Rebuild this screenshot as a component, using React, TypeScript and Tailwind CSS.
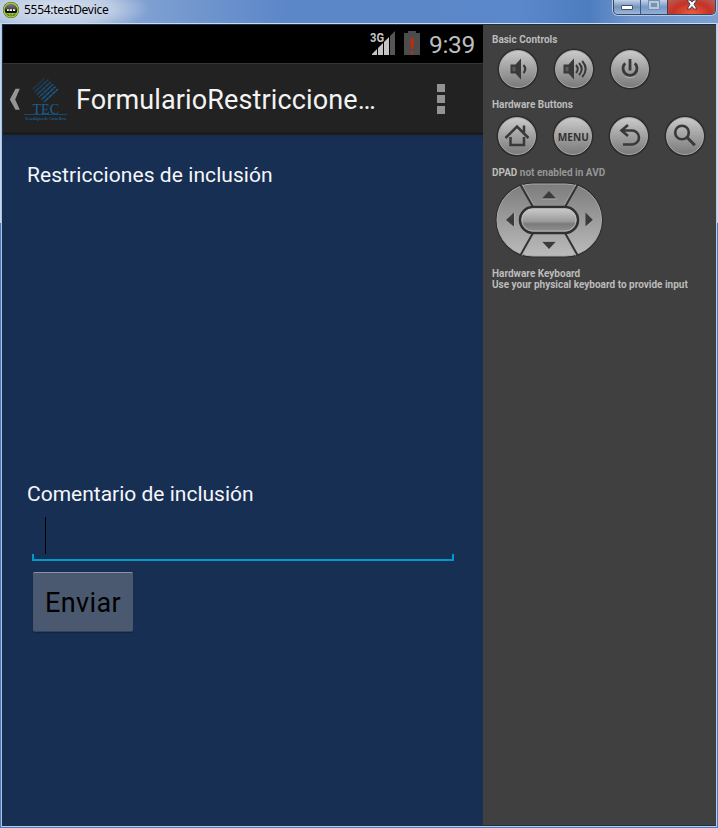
import type { ReactNode } from 'react';

function AndroidAppIcon() {
  return (
    <svg className="ml-[2px] mt-[1px] h-[18px] w-[18px] shrink-0" viewBox="0 0 18 18">
      <defs>
        <linearGradient id="orb" x1="0" y1="0" x2="0" y2="1">
          <stop offset="0" stopColor="#8a8a8a" />
          <stop offset="0.45" stopColor="#444" />
          <stop offset="0.5" stopColor="#090909" />
          <stop offset="1" stopColor="#222" />
        </linearGradient>
      </defs>
      <circle cx="9" cy="9" r="8" fill="#1b2a08" />
      <circle cx="9" cy="9" r="7" fill="url(#orb)" stroke="#a4cc35" strokeWidth="1.5" />
      <path d="M4 12h10l-1 2-4 1-4-1z" fill="#a4cc35" />
      <path d="M5 9.2h1.8M7.6 9.2H10M11 9.2h2.2" stroke="#fff" strokeWidth="1.8" />
      <path d="M6 12.5v2M9 12.5v2M12 12.5v2" stroke="#37500d" />
    </svg>
  );
}

function TitleBar() {
  return (
    <header className="flex h-[23px] items-start bg-[radial-gradient(ellipse_95px_26px_at_55px_9px,#d7e0ef_0%,#bdcce4_60%,transparent_100%),linear-gradient(90deg,#91add7_0%,#7fa0d2_20%,#5b86c8_40%,#5b88ca_72%,#4d7dbf_82%,#7196cc_88%,#7da0d3_100%)]">
      <AndroidAppIcon />
      <h1 className="ml-[4px] mt-[2px] whitespace-nowrap font-['Noto_Sans',sans-serif] text-[12px] leading-[16px] tracking-[-0.3px] text-black">5554:testDevice</h1>
      <div className="ml-auto mr-[2px] flex h-[15px] w-[103px] overflow-hidden rounded-b-[5px] border border-t-0 border-[#334766] shadow-[0_0_0_1px_#b5cae5]">
        <div className="flex w-[27px] justify-center border-r border-[#415779] bg-linear-to-b from-[#c3d2e8] via-[#7495bf] to-[#9db9db]">
          <span className="mt-[5px] h-[5px] w-[12px] rounded-[1px] border border-[#44516b] bg-white" />
        </div>
        <div className="flex w-[27px] justify-center border-r border-[#5b3547] bg-linear-to-b from-[#c3d2e8] via-[#7698c7] to-[#91b0d9]">
          <span className="mt-[1px] h-[8px] w-[10px] border-2 border-[#b7c7de] bg-[#7c91b0] outline outline-[#7890b3]" />
        </div>
        <div className="flex flex-1 justify-center bg-[radial-gradient(ellipse_at_bottom,#f15b3d,#c43326_58%,#b8605a)]">
          <svg className="h-[10px] w-[12px]" viewBox="0 0 12 10">
            <path d="M1 0h3l2 2 2-2h3L8 4.2 11 9H8L6 6.5 4 9H1l3-4.8z" fill="#f5f5fa" stroke="#434451" />
          </svg>
        </div>
      </div>
    </header>
  );
}

function StatusBar() {
  return (
    <div className="flex h-[38px] justify-end bg-black">
      <svg className="mt-[4px] h-[28px] w-[28px]" viewBox="0 0 28 28">
        <text x="0" y="12.8" fontFamily="Roboto, sans-serif" fontWeight="700" fontSize="12.5" textLength="14" lengthAdjust="spacingAndGlyphs" fill="#c4c4c4">3G</text>
        <path d="M2 26v-1l5-5v6zM8 26v-7l5-5v12zM14 26V13l5-5v18z" fill="#c4c4c4" />
        <path d="M20 26V7l5-5v24z" fill="#555" />
      </svg>
      <svg className="ml-[6px] mt-[5px] h-[26px] w-[16px]" viewBox="0 0 16 26">
        <path d="M0 3h4V1h8v2h4v22H0z" fill="#4c4c4c" />
        <path d="M6.7 8h3v6l-.7 5H7.4l-.7-5zM7 21h2.5v2.5H7z" fill="#c82a08" />
      </svg>
      <span className="ml-[9px] mr-[8px] mt-[5px] font-['Roboto',sans-serif] text-[24.5px] leading-[30px] tracking-[-0.3px] text-[#bebebe]">9:39</span>
    </div>
  );
}

function TecLogo() {
  return (
    <svg className="ml-[3px] mt-[12px] h-[48px] w-[46px] shrink-0 overflow-visible" viewBox="0 0 46 48">
      <g stroke="#1b5b8c" strokeWidth="1.7">
        <path d="M20 26l14-13" />
        <path d="M17.5 23.7l14-13" opacity=".88" />
        <path d="M15.2 21.2l14-13" opacity=".78" />
        <path d="M12.8 18.8l14-13" opacity=".65" />
        <path d="M10.5 16.3l14-13" opacity=".5" />
        <path d="M8.5 13.5l12-11" opacity=".3" />
      </g>
      <path d="M9 13l13 13M13 10l13 13M17 7l13 13M20 3l12 12" stroke="#222" strokeWidth=".6" />
      <text x="8.5" y="37.5" fontFamily="Liberation Serif, serif" fontSize="15" textLength="26.5" lengthAdjust="spacingAndGlyphs" fill="#1a5f92">TEC</text>
      <path d="M0 38.5h43" stroke="#164b70" />
      <text x="1" y="43.8" fontFamily="Liberation Serif, serif" fontWeight="700" fontSize="5" textLength="41" lengthAdjust="spacingAndGlyphs" fill="#1d5d8c">Tecnológico de Costa Rica</text>
    </svg>
  );
}

function ActionBar() {
  return (
    <div className="flex h-[72px] items-start border-b-[3px] border-t border-b-[#1b1b1b] border-t-[#353535] bg-[#222] font-['Roboto',sans-serif]">
      <svg className="ml-[6px] mt-[24px] h-[23px] w-[12px] shrink-0" viewBox="0 0 12 23">
        <path d="M6.5 .8h4.3L6.2 11.5l4.6 10.3H6.5L.8 11.5z" fill="#959595" />
      </svg>
      <TecLogo />
      <h2 className="ml-[6px] mt-[20px] whitespace-nowrap text-[27px] leading-[32px] tracking-[0.12px] text-[#f3f3f3]">FormularioRestriccione…</h2>
      <div className="ml-auto mr-[38px] mt-[20px] flex flex-col gap-[3px]">
        <i className="h-[8px] w-[8px] bg-[#939393]" />
        <i className="h-[8px] w-[8px] bg-[#939393]" />
        <i className="h-[8px] w-[8px] bg-[#939393]" />
      </div>
    </div>
  );
}

function Phone() {
  return (
    <main className="flex w-[480px] shrink-0 flex-col bg-[#182f54] font-['Roboto',sans-serif]">
      <StatusBar />
      <ActionBar />
      <form className="flex flex-col items-start bg-[linear-gradient(#162b4e,#182f54_10px)] px-[24px] pt-[27px]">
        <p className="text-[21px] leading-[26px] tracking-[0.07px] text-[#f5f7fa]">Restricciones de inclusión</p>
        <label className="mt-[293px] text-[21px] leading-[26px] text-[#f5f7fa]">Comentario de inclusión</label>
        <div className="ml-[5px] mt-[10px] flex h-[44px] w-[422px] flex-col">
          <i className="ml-[13px] h-[37px] w-px bg-black" />
          <i className="h-[7px] w-full shrink-0 border-x-2 border-b-2 border-[#0099cc]" />
        </div>
        <button type="button" className="ml-[6px] mt-[11px] h-[60px] w-[100px] rounded-[2px] border-b border-t border-b-[#34435c] border-t-[#8994a6] bg-[#4a5970] pt-px text-[27px] leading-[32px] tracking-[0.4px] text-black shadow-[0_1px_1px_#122441]">Enviar</button>
      </form>
    </main>
  );
}

function RoundButton({ children }: { children: ReactNode }) {
  return (
    <button type="button" className="h-[38px] w-[38px] rounded-full border border-[#aaa] bg-linear-to-b from-[#cacaca] via-[#a1a1a1] to-[#7b7b7b] shadow-[0_0_0_1.5px_#2c2c2c]">
      <svg className="h-[36px] w-[36px]" viewBox="0 0 36 36" fill="none" stroke="#393939" strokeWidth="3">
        {children}
      </svg>
    </button>
  );
}

function DPad() {
  return (
    <svg className="ml-[3px] h-[78px] w-[110px]" viewBox="0 0 110 78">
      <defs>
        <linearGradient id="pad" x1="0" y1="0" x2="0" y2="1">
          <stop offset="0" stopColor="#7d7d7d" />
          <stop offset="1" stopColor="#bbb" />
        </linearGradient>
        <linearGradient id="pill" x1="0" y1="0" x2="0" y2="1">
          <stop offset="0" stopColor="#d0d0d0" />
          <stop offset=".55" stopColor="#9b9b9b" />
          <stop offset=".65" stopColor="#7b7b7b" />
          <stop offset="1" stopColor="#949494" />
        </linearGradient>
      </defs>
      <rect x="0.5" y="1.5" width="107.5" height="75" rx="37.5" fill="#2c2c2c" />
      <rect x="2" y="3" width="104.5" height="72" rx="36" fill="url(#pad)" stroke="#aaa" />
      <path d="M25 3l13 23M83 3L70 26M25 75l13-23M83 75L70 52" stroke="#333" strokeWidth="2" />
      <path d="M27 3l12 21M81 3L69 24M27 75l12-21M81 75L69 54" stroke="#aaa" strokeWidth=".6" />
      <rect x="25" y="26" width="58" height="26" rx="13" fill="url(#pill)" stroke="#303030" strokeWidth="2.5" />
      <rect x="27" y="28" width="54" height="22" rx="11" fill="none" stroke="#c3c3c3" strokeWidth=".7" />
      <path d="M54 10l7 7.5H47zM54 68l7-7.5H47zM11 39l8-7.5v14zM98 39l-7.5-7.5v14z" fill="#3b3b3b" />
      <path d="M47 18h15M47 60.5h14M19.5 32v14M90.5 46l8-7" fill="none" stroke="#b2b2b2" strokeWidth=".7" />
    </svg>
  );
}

function Controls() {
  return (
    <aside className="flex flex-1 flex-col bg-[#404040] pl-[9px] pt-[9px] font-['Roboto',sans-serif] text-[10px] font-bold leading-[12px] text-[#bcbcbc]">
      <h3>Basic Controls</h3>
      <div className="ml-[7px] mt-[4px] flex gap-[18px]">
        <RoundButton>
          <path d="M10.5 13.5h5l5.5-6v21l-5.5-6h-5z" fill="#393939" stroke="none" />
          <path d="M12.5 15.8h3v4.5h-3z" fill="#5c5c5c" stroke="none" />
          <path d="M23.5 14q3.5 4 0 8" strokeWidth="2.2" />
        </RoundButton>
        <RoundButton>
          <path d="M7.5 13.5h5l5.5-6v21l-5.5-6h-5z" fill="#393939" stroke="none" />
          <path d="M9.5 15.8h3v4.5h-3z" fill="#5c5c5c" stroke="none" />
          <path d="M20 14q3.5 4 0 8M23 12q5.5 6 0 12M26.2 10q7 8 0 16" strokeWidth="2" />
        </RoundButton>
        <RoundButton>
          <path d="M18 8v11.5M13.2 12.2a7 7 0 1 0 9.6 0" strokeWidth="2.8" />
          <path d="M13 25.5q5 2.4 10 0" stroke="#bbb" strokeWidth=".8" />
        </RoundButton>
      </div>
      <h3 className="mt-[11px]">Hardware Buttons</h3>
      <div className="ml-[6px] mt-[6px] flex gap-[18px]">
        <RoundButton>
          <path d="M6.5 20L18 8.5 29.5 20M25 7.5v7" strokeWidth="2.5" />
          <path d="M11.5 19v8H25v-8" strokeWidth="2.5" />
        </RoundButton>
        <RoundButton>
          <text x="2.8" y="22.7" fontFamily="Open Sans, sans-serif" fontWeight="700" fontSize="11" textLength="31" lengthAdjust="spacingAndGlyphs" fill="#333" stroke="none">MENU</text>
        </RoundButton>
        <RoundButton>
          <path d="M17 7l-6.5 5.5L17 18M11.5 12.5H21a7 7 0 0 1 0 14h-9" strokeWidth="2.6" />
        </RoundButton>
        <RoundButton>
          <circle cx="15" cy="14.5" r="6.8" strokeWidth="2.6" />
          <path d="M19.8 19.3l8 8" strokeWidth="3" />
        </RoundButton>
      </div>
      <p className="mt-[12px]">DPAD <span className="text-[#969696]">not enabled in AVD</span></p>
      <div className="mt-[2px] flex"><DPad /></div>
      <p className="mt-[9px] leading-[11px]">Hardware Keyboard<br />Use your physical keyboard to provide input</p>
    </aside>
  );
}

export default function App() {
  return (
    <div className="flex h-[828px] w-[718px] flex-col overflow-hidden bg-[#628bc7]">
      <TitleBar />
      <div className="flex h-[805px] bg-[linear-gradient(#c5d5ec_0_200px,#4b7bbd_200px)] pr-[1px]">
        <div className="mb-[1px] ml-[1px] flex flex-1 border border-t-[#c8dcf2] border-b-[#b8cce7] border-l-[#a8c5e4] border-r-[#b9cde9] bg-[#202e45]">
          <div className="mb-[1px] ml-[1px] mt-[1px] flex flex-1">
            <Phone />
            <Controls />
          </div>
        </div>
      </div>
    </div>
  );
}
